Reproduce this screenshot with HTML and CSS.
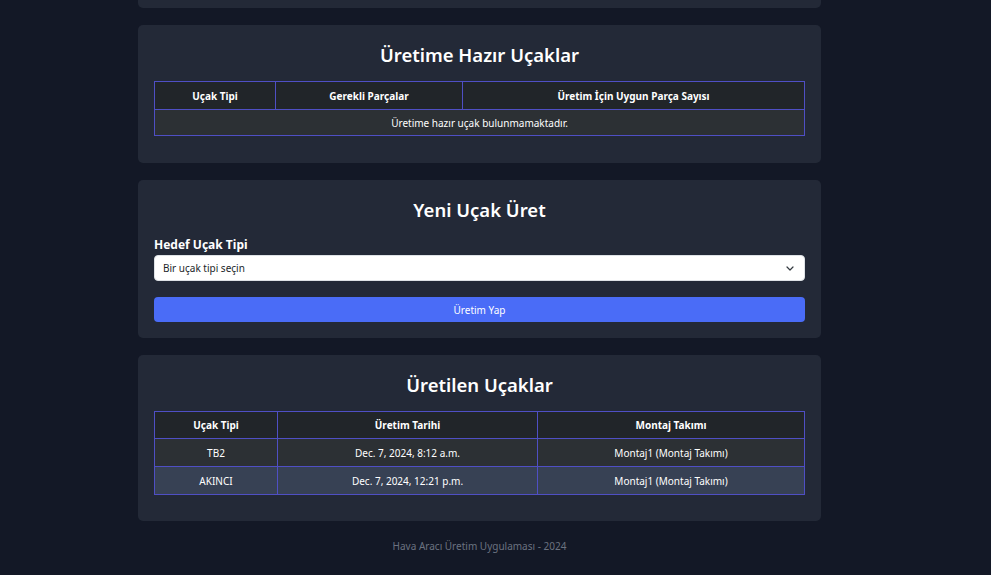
FILE: index.html
```html
<!DOCTYPE html>
<html lang="tr">
<head>
<meta charset="utf-8">
<title>Hava Aracı Üretim Uygulaması</title>
<link rel="stylesheet" href="styles.css">
</head>
<body>
<div class="page">
  <main class="container">
    <section class="card card-stub"></section>

    <section class="card">
      <h2 class="card-title">Üretime Hazır Uçaklar</h2>
      <table class="data-table ready-table">
        <thead>
          <tr>
            <th class="c1">Uçak Tipi</th>
            <th class="c2">Gerekli Parçalar</th>
            <th>Üretim İçin Uygun Parça Sayısı</th>
          </tr>
        </thead>
        <tbody>
          <tr class="row-odd">
            <td colspan="3">Üretime hazır uçak bulunmamaktadır.</td>
          </tr>
        </tbody>
      </table>
    </section>

    <section class="card">
      <h2 class="card-title">Yeni Uçak Üret</h2>
      <form class="produce-form">
        <label class="field-label" for="target">Hedef Uçak Tipi</label>
        <div class="select-wrap">
          <select id="target" class="select">
            <option>Bir uçak tipi seçin</option>
          </select>
          <svg class="chevron" width="8" height="5" viewBox="0 0 8 5"><path d="M1 1l3 3 3-3" fill="none" stroke="#343a40" stroke-width="1.2" stroke-linecap="round" stroke-linejoin="round"/></svg>
        </div>
        <button type="button" class="btn-primary">Üretim Yap</button>
      </form>
    </section>

    <section class="card">
      <h2 class="card-title">Üretilen Uçaklar</h2>
      <table class="data-table produced-table">
        <thead>
          <tr>
            <th class="p1">Uçak Tipi</th>
            <th class="p2">Üretim Tarihi</th>
            <th>Montaj Takımı</th>
          </tr>
        </thead>
        <tbody>
          <tr class="row-odd">
            <td>TB2</td>
            <td>Dec. 7, 2024, 8:12 a.m.</td>
            <td>Montaj1 (Montaj Takımı)</td>
          </tr>
          <tr class="row-hover">
            <td>AKINCI</td>
            <td>Dec. 7, 2024, 12:21 p.m.</td>
            <td>Montaj1 (Montaj Takımı)</td>
          </tr>
        </tbody>
      </table>
    </section>

    <footer class="footer">Hava Aracı Üretim Uygulaması - 2024</footer>
  </main>
</div>
</body>
</html>
```

FILE: styles.css
```css
* { box-sizing: border-box; }

html, body {
  margin: 0;
  padding: 0;
  background: #131826;
}

body {
  font-family: "Noto Sans", "Open Sans", "DejaVu Sans", sans-serif;
  color: #ffffff;
  min-height: 575px;
}

.page {
  width: 959px;
}

.container {
  width: 683px;
  margin: 0 auto;
  display: flex;
  flex-direction: column;
  gap: 17px;
}

.card {
  background: #232937;
  border-radius: 5px;
  padding: 16px 16px 16px;
}

.card-stub {
  height: 8px;
  padding: 0;
  border-radius: 0 0 5px 5px;
}

.card-title {
  margin: 0 0 12px;
  text-align: center;
  font-size: 18.5px;
  line-height: 28px;
  font-weight: 600;
  color: #ffffff;
}

.data-table {
  width: 100%;
  border-collapse: collapse;
  font-size: 10px;
  margin-bottom: 11px;
}

.produced-table { margin-bottom: 10px; }

.data-table th,
.data-table td {
  border: 1px solid #4f4fc4;
  text-align: center;
  padding: 0 6px;
  height: 27px;
  color: #ffffff;
}

.data-table td { height: 26px; }

.data-table th {
  background: #212529;
  font-weight: 700;
}

.ready-table th { height: 28px; }

.ready-table .c1 { width: 121px; }
.ready-table .c2 { width: 187px; }
.produced-table .p1 { width: 123px; }
.produced-table .p2 { width: 260px; }

.produced-table td { height: 28px; }

.row-odd td { background: #2c3034; }
.row-hover td { background: #374154; }

.produce-form {
  display: flex;
  flex-direction: column;
}

.field-label {
  font-size: 12px;
  line-height: 16px;
  font-weight: 700;
  margin-top: 1px;
  margin-bottom: 2px;
}

.select-wrap {
  position: relative;
  height: 26px;
}

.select {
  appearance: none;
  -webkit-appearance: none;
  width: 100%;
  height: 26px;
  background: #ffffff;
  border: 1px solid #dee2e6;
  border-radius: 4px;
  padding: 0 24px 0 8px;
  font-family: inherit;
  font-size: 10px;
  color: #212529;
}

.chevron {
  position: absolute;
  right: 11px;
  top: 11px;
  pointer-events: none;
}

.btn-primary {
  margin-top: 16px;
  height: 25px;
  border: none;
  border-radius: 4px;
  background: #4a6cf7;
  color: #ffffff;
  font-family: inherit;
  font-size: 10px;
}

.footer {
  margin-top: 0;
  text-align: center;
  font-size: 10px;
  line-height: 16px;
  color: #6b7280;
  padding-bottom: 22px;
}
```
